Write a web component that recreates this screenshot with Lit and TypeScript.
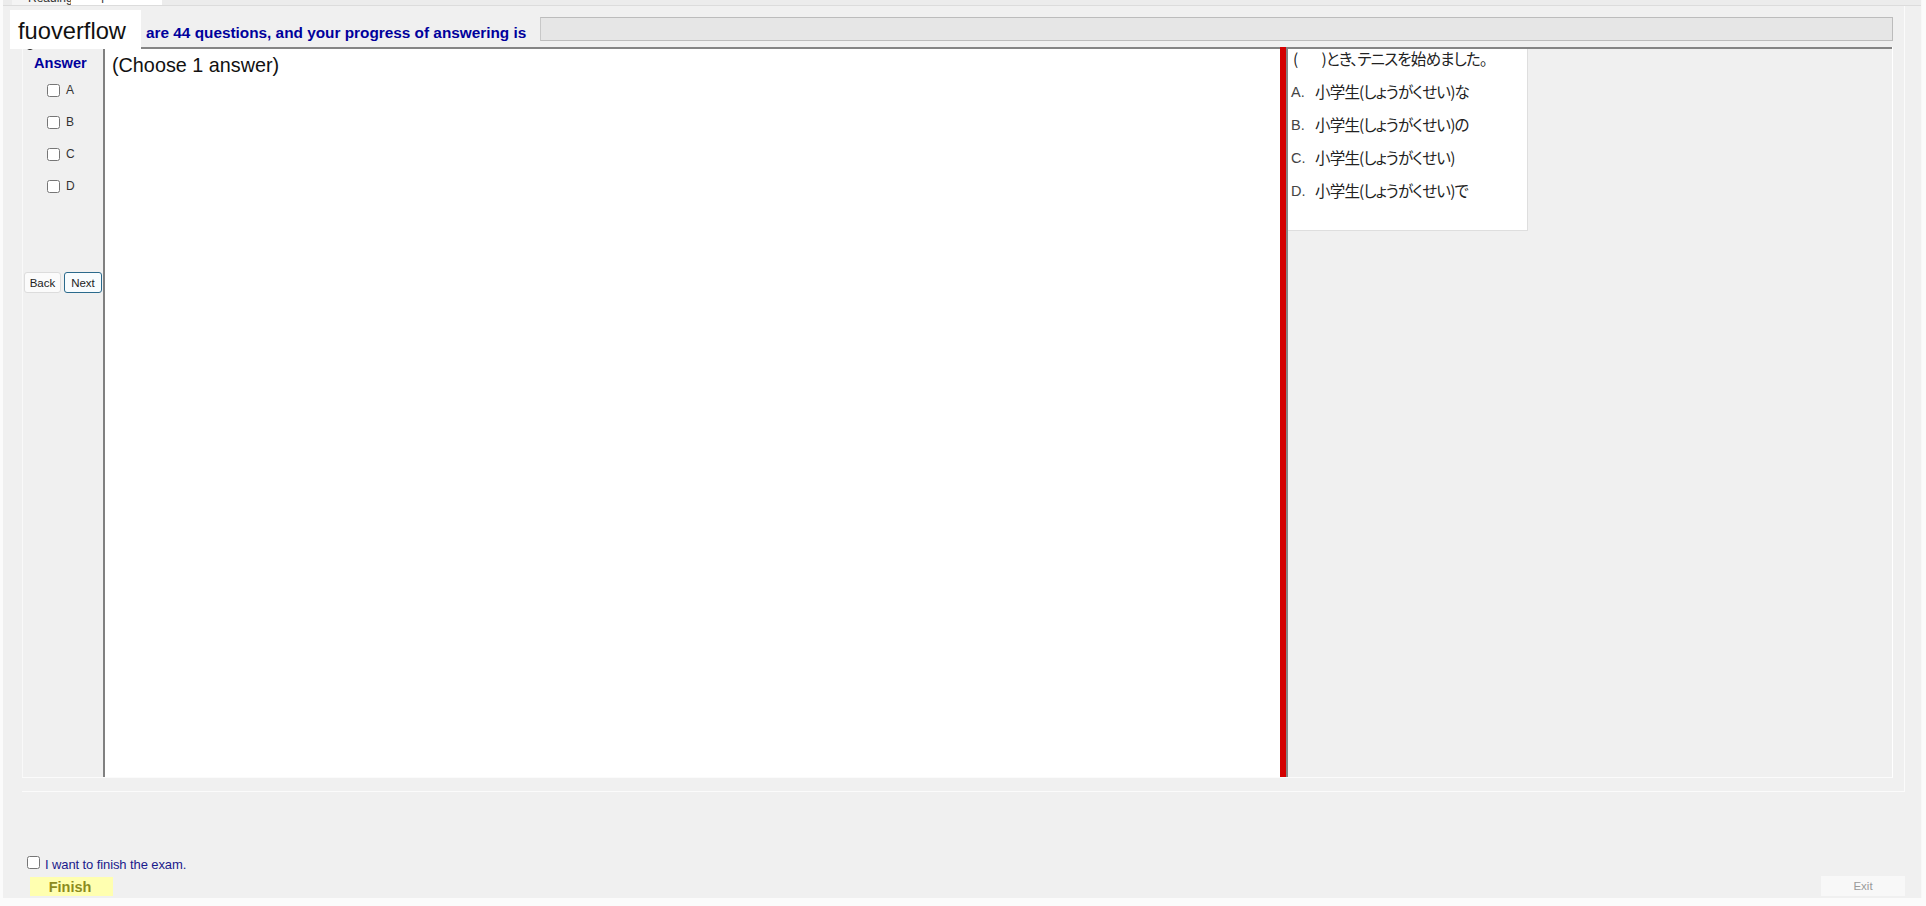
import { LitElement, html, css } from "lit";
import { customElement } from "lit/decorators.js";

const OPTIONS = [
  ["A.", "小学生(しょうがくせい)な"],
  ["B.", "小学生(しょうがくせい)の"],
  ["C.", "小学生(しょうがくせい)"],
  ["D.", "小学生(しょうがくせい)で"],
];

@customElement("app-root")
export class AppRoot extends LitElement {
  static styles = css`
    :host {
      display: block;
      width: 1926px;
      height: 906px;
      background: #fbfbfb;
      overflow: hidden;
      position: relative;
      font-family: "Liberation Sans", Arial, sans-serif;
    }
    .window {
      margin-left: 3px;
      width: 1919px;
      height: 898px;
      background: #f0f0f0;
      display: flex;
      flex-direction: column;
      border-right: 1px solid #f8f8f8;
      box-sizing: border-box;
    }
    .tabs {
      height: 6px;
      flex: none;
      box-sizing: border-box;
      display: flex;
      align-items: flex-end;
      overflow: hidden;
      padding-left: 9px;
      border-bottom: 1px solid #dcdcdc;
      background: #ececec;
      font-size: 12px;
      color: #333;
    }
    .tab {
      height: 5px;
      flex: none;
      overflow: hidden;
      line-height: 5px;
      position: relative;
    }
    .tab span {
      position: relative;
      display: block;
      white-space: nowrap;
    }
    .tab.first { width: 59px; padding-left: 16px; box-sizing: border-box; background: #f4f4f4; }
    .tab.first span { top: -4px; }
    .tab.active { width: 91px; padding-left: 5px; box-sizing: border-box; background: #ffffff; }
    .tab.active span { top: -6px; }
    .panel {
      margin-left: 19px;
      width: 1883px;
      height: 786px;
      flex: none;
      box-sizing: border-box;
      border-right: 1px solid #fbfbfb;
      border-bottom: 1px solid #fbfbfb;
      display: flex;
      flex-direction: column;
    }
    .head {
      height: 41px;
      flex: none;
      display: flex;
      align-items: flex-start;
      padding-left: 124px;
    }
    .head-text {
      font-size: 15.35px;
      font-weight: 700;
      color: #00009c;
      white-space: nowrap;
      line-height: 18px;
      margin-top: 18px;
      width: 394px;
      flex: none;
    }
    .progress {
      margin-top: 11px;
      height: 24px;
      width: 1353px;
      flex: none;
      box-sizing: border-box;
      background: #e6e6e6;
      border: 1px solid #bcbcbc;
      border-left-color: #c8c8c8;
    }
    .work {
      width: 1871px;
      height: 731px;
      flex: none;
      display: flex;
      border-bottom: 1px solid #fbfbfb;
      border-right: 1px solid #ffffff;
      box-sizing: border-box;
    }
    .side {
      width: 81px;
      flex: none;
      box-sizing: border-box;
      display: flex;
      flex-direction: column;
      border-left: 1px solid #f9f9f9;
      padding-left: 1px;
    }
    .side-title {
      margin-top: 8px;
      height: 16px;
      line-height: 16px;
      font-size: 14.6px;
      font-weight: 700;
      color: #00009c;
      padding-left: 10px;
    }
    .choices {
      margin-top: 13px;
      display: flex;
      flex-direction: column;
      gap: 19px;
      padding-left: 23px;
    }
    .choice {
      display: flex;
      align-items: center;
      height: 13px;
      font-size: 12px;
      color: #333;
      gap: 6px;
    }
    .choice span { position: relative; top: -1px; }
    input[type="checkbox"] { margin: 0; width: 13px; height: 13px; flex: none; }
    .nav {
      margin-top: 79px;
      display: flex;
      gap: 3px;
    }
    .btn {
      height: 21px;
      box-sizing: border-box;
      padding: 0;
      font: 11.5px "Liberation Sans", Arial, sans-serif;
      color: #222;
      border-radius: 3px;
      background: #fbfbfb;
      border: 1px solid #dcdcdc;
      width: 37px;
    }
    .btn.next { width: 38px; background: #f8fcfe; border: 1px solid #2a6a8c; }
    .main {
      width: 1177px;
      flex: none;
      box-sizing: border-box;
      background: #ffffff;
      border-left: 2px solid #808080;
      border-top: 2px solid #858585;
      font-size: 19.8px;
      color: #111;
      padding: 4px 0 0 7px;
      line-height: 24px;
    }
    .divider {
      width: 6px;
      flex: none;
      background: #d40000;
      box-sizing: border-box;
    }
    .right {
      flex: 1;
      min-width: 0;
      box-sizing: border-box;
      border-top: 2px solid #858585;
      border-left: 2px solid #858585;
      display: flex;
      align-items: flex-start;
    }
    .question {
      width: 240px;
      height: 182px;
      box-sizing: border-box;
      background: #ffffff;
      border-right: 1px solid #dedede;
      border-bottom: 1px solid #dedede;
      padding: 0 0 0 3px;
      display: flex;
      flex-direction: column;
      gap: 13px;
      font-family: "Noto Sans CJK JP", "Liberation Sans", sans-serif;
      font-feature-settings: "palt";
      font-size: 15.5px;
      line-height: 20px;
      letter-spacing: -0.8px;
      color: #222;
      overflow: hidden;
    }
    .q-line { padding-left: 2px; white-space: pre; line-height: 18px; margin-bottom: 1px; }
    .opt { display: flex; white-space: nowrap; height: 20px; }
    .opt b {
      font: 400 14.5px/20px "Liberation Sans", Arial, sans-serif;
      color: #444;
      width: 24px;
      flex: none;
      letter-spacing: 0;
      position: relative;
      top: 1px;
    }
    .foot {
      flex: 1;
      display: flex;
      justify-content: space-between;
      align-items: flex-end;
      padding: 0 16px 2px 24px;
    }
    .foot-left { display: flex; flex-direction: column; gap: 8px; }
    .agree {
      display: flex;
      align-items: center;
      gap: 5px;
      height: 13px;
      font-size: 13px;
      color: #1a1a8c;
      white-space: nowrap;
    }
    .agree span { position: relative; top: 2px; letter-spacing: -0.1px; }
    .finish {
      margin-left: 3px;
      width: 83px;
      height: 19px;
      padding: 0 3px 0 0;
      border: none;
      background: #ffffb0;
      color: #8c8c1e;
      font: 700 14.5px "Liberation Sans", Arial, sans-serif;
    }
    .exit {
      width: 84px;
      height: 20px;
      padding: 0;
      border: none;
      background: #f8f8f8;
      color: #9a9a9a;
      font: 11.5px "Liberation Sans", Arial, sans-serif;
    }
    .brand {
      position: absolute;
      left: 10px;
      top: 10px;
      width: 131px;
      height: 39px;
      box-sizing: border-box;
      background: #ffffff;
      font-size: 23.7px;
      line-height: 43px;
      padding-left: 8px;
      color: #111;
    }
    .mark {
      position: absolute;
      left: 25px;
      top: 45px;
      width: 10px;
      height: 5px;
      box-sizing: border-box;
      border-bottom: 2px solid #222;
      border-radius: 0 0 6px 6px;
    }
  `;

  render() {
    return html`
      <div class="window">
        <div class="tabs">
          <div class="tab first"><span>Reading</span></div>
          <div class="tab active"><span>Multiple Choice</span></div>
        </div>
        <div class="panel">
          <div class="head">
            <div class="head-text">are 44 questions, and your progress of answering is</div>
            <div class="progress"></div>
          </div>
          <div class="work">
            <div class="side">
              <div class="side-title">Answer</div>
              <div class="choices">
                ${["A", "B", "C", "D"].map(
                  (c) => html`<label class="choice"><input type="checkbox" /><span>${c}</span></label>`
                )}
              </div>
              <div class="nav">
                <button class="btn">Back</button>
                <button class="btn next">Next</button>
              </div>
            </div>
            <div class="main">(Choose 1 answer)</div>
            <div class="divider"></div>
            <div class="right">
              <div class="question">
                <div class="q-line">(         )とき、テニスを始めました。</div>
                ${OPTIONS.map(
                  ([k, v]) => html`<div class="opt"><b>${k}</b><span>${v}</span></div>`
                )}
              </div>
            </div>
          </div>
        </div>
        <div class="foot">
          <div class="foot-left">
            <label class="agree"><input type="checkbox" /><span>I want to finish the exam.</span></label>
            <button class="finish">Finish</button>
          </div>
          <button class="exit" disabled>Exit</button>
        </div>
      </div>
      <div class="mark"></div>
      <div class="brand">fuoverflow</div>
    `;
  }
}
